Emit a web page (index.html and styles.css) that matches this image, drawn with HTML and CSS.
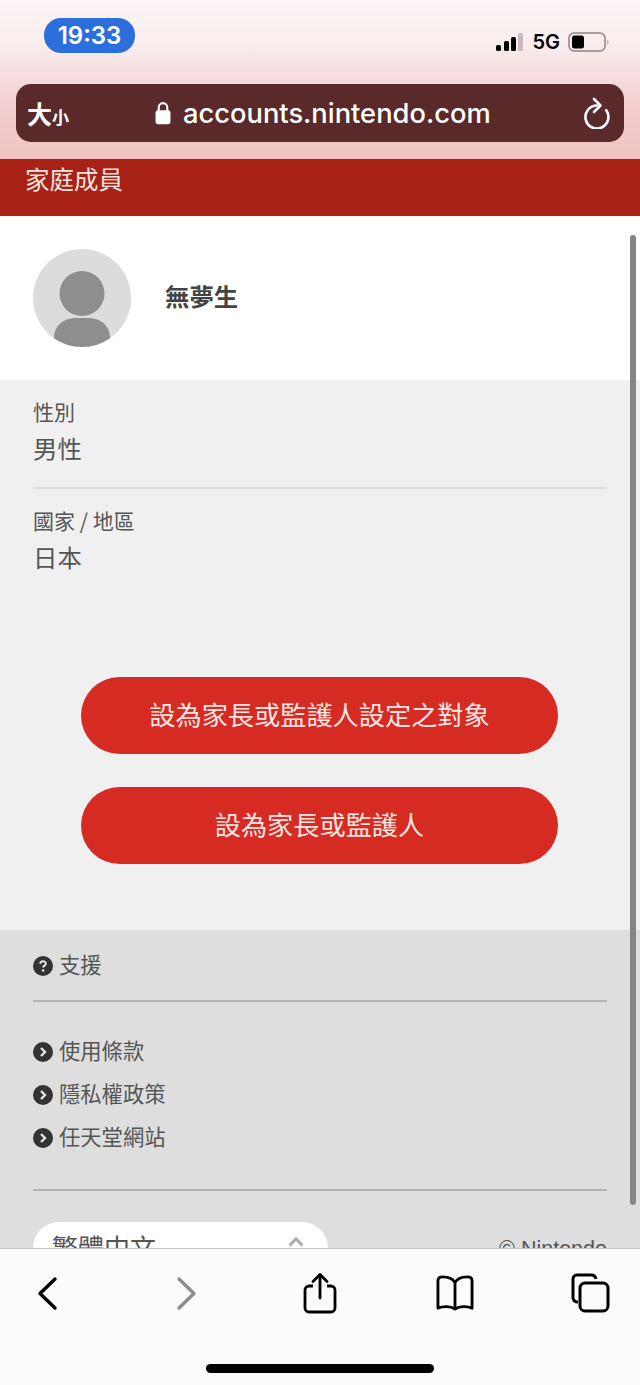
FILE: index.html
```html
<!DOCTYPE html>
<html lang="zh-Hant">
<head>
  <meta charset="UTF-8" />
  <meta name="viewport" content="width=device-width, initial-scale=1.0"/>
  <title>家庭成員</title>
  <link rel="stylesheet" href="styles.css">
</head>
<body>
  <div class="phone">
    <header class="chrome">
      <div class="status-row">
        <span class="clock">19:33</span>
        <div class="status-icons">
          <svg class="signal" width="29" height="20" viewBox="0 0 29 20">
            <rect x="1" y="13" width="5" height="6" rx="1.5" fill="#000"/>
            <rect x="9" y="9" width="5" height="10" rx="1.5" fill="#000"/>
            <rect x="16" y="5" width="5" height="14" rx="1.5" fill="#000"/>
            <rect x="23" y="1" width="5" height="18" rx="1.5" fill="#c9b9bc"/>
          </svg>
          <span class="network">5G</span>
          <svg class="battery" width="42" height="20" viewBox="0 0 42 20">
            <rect x="1" y="1" width="36" height="18" rx="5" fill="none" stroke="#8f8386" stroke-width="1.5"/>
            <rect x="4" y="3.5" width="12" height="13" rx="2.5" fill="#000"/>
            <path d="M39.5 7.5c1 .6 1.3 4.4 0 5z" fill="#8f8386"/>
          </svg>
        </div>
      </div>
      <div class="url-bar">
        <span class="text-size"><b>大</b><small>小</small></span>
        <div class="address">
          <svg width="16" height="24" viewBox="0 0 15 22">
            <path d="M3.5 9V5.8a4 4 0 0 1 8 0V9" fill="none" stroke="#fff" stroke-width="2"/>
            <rect x="0.5" y="8.5" width="14" height="13" rx="2" fill="#fff"/>
          </svg>
          <span>accounts.nintendo.com</span>
        </div>
        <svg class="reload" width="28" height="32" viewBox="0 0 28 32">
          <path d="M14 8.5A11.5 11.5 0 1 0 23.2 13.2" fill="none" stroke="#fff" stroke-width="2.6" stroke-linecap="round"/>
          <path d="M11 2l6.500 6.500L11 15" fill="none" stroke="#fff" stroke-width="2.6" stroke-linecap="round" stroke-linejoin="round"/>
        </svg>
      </div>
    </header>

    <main class="page">
      <div class="title-band">家庭成員</div>

      <section class="profile">
        <svg class="avatar" width="98" height="98" viewBox="0 0 98 98">
          <circle cx="49" cy="49" r="49" fill="#dcdcdc"/>
          <circle cx="49" cy="44.5" r="22.5" fill="#8e8e8e"/>
          <path d="M21 89.2C21 78 29 69 43 69h12c14 0 22 9 22 20.2A49 49 0 0 1 21 89.2z" fill="#8e8e8e"/>
        </svg>
        <span class="profile-name">無夢生</span>
      </section>

      <section class="details">
        <div class="field">
          <div class="field-label">性別</div>
          <div class="field-value">男性</div>
        </div>
        <div class="field field-last">
          <div class="field-label">國家 / 地區</div>
          <div class="field-value">日本</div>
        </div>
        <div class="buttons">
          <a href="#" class="red-btn">設為家長或監護人設定之對象</a>
          <a href="#" class="red-btn">設為家長或監護人</a>
        </div>
      </section>

      <footer class="site-footer">
        <div class="support">
          <a href="#" class="foot-link">
            <svg width="20" height="20" viewBox="0 0 20 20">
              <circle cx="10" cy="10" r="10" fill="#333"/>
              <path d="M7.3 7.8c0-3.4 5.5-3.4 5.5-.2 0 2-2.7 2-2.7 4" fill="none" stroke="#e6e6e6" stroke-width="2"/>
              <circle cx="10.1" cy="14.5" r="1.3" fill="#e6e6e6"/>
            </svg>
            <span>支援</span>
          </a>
        </div>
        <div class="foot-links">
          <a href="#" class="foot-link">
            <svg width="20" height="20" viewBox="0 0 20 20">
              <circle cx="10" cy="10" r="10" fill="#333"/>
              <path d="M8 6l4 4-4 4" fill="none" stroke="#e6e6e6" stroke-width="2.4"/>
            </svg>
            <span>使用條款</span>
          </a>
          <a href="#" class="foot-link">
            <svg width="20" height="20" viewBox="0 0 20 20">
              <circle cx="10" cy="10" r="10" fill="#333"/>
              <path d="M8 6l4 4-4 4" fill="none" stroke="#e6e6e6" stroke-width="2.4"/>
            </svg>
            <span>隱私權政策</span>
          </a>
          <a href="#" class="foot-link">
            <svg width="20" height="20" viewBox="0 0 20 20">
              <circle cx="10" cy="10" r="10" fill="#333"/>
              <path d="M8 6l4 4-4 4" fill="none" stroke="#e6e6e6" stroke-width="2.4"/>
            </svg>
            <span>任天堂網站</span>
          </a>
        </div>
        <div class="foot-bottom">
          <div class="lang-select">
            <span>繁體中文</span>
            <svg width="16" height="10" viewBox="0 0 16 10">
              <path d="M1.5 8.5L8 2l6.5 6.5" fill="none" stroke="#aaa" stroke-width="3"/>
            </svg>
          </div>
          <span class="copyright">© Nintendo</span>
        </div>
      </footer>

      <div class="scroll-thumb"></div>
    </main>

    <nav class="toolbar">
      <div class="tool-row">
        <svg width="24" height="36" viewBox="0 0 24 36">
          <path d="M20 4L5 18.5 20 33" fill="none" stroke="#000" stroke-width="3.4" stroke-linecap="round" stroke-linejoin="round"/>
        </svg>
        <svg class="forward" width="24" height="36" viewBox="0 0 24 36">
          <path d="M4 4l15 14.5L4 33" fill="none" stroke="#8c8c8c" stroke-width="3.4" stroke-linecap="round" stroke-linejoin="round"/>
        </svg>
        <svg class="share" width="34" height="42" viewBox="0 0 34 42">
          <path d="M10 14H6a4 4 0 0 0-4 4v18a4 4 0 0 0 4 4h22a4 4 0 0 0 4-4V18a4 4 0 0 0-4-4h-4" fill="none" stroke="#000" stroke-width="2.8"/>
          <path d="M17 26V3M10 9.5L17 2.5l7 7" fill="none" stroke="#000" stroke-width="2.8" stroke-linecap="round" stroke-linejoin="round"/>
        </svg>
        <svg width="40" height="36" viewBox="0 0 42 38">
          <path d="M21 8C18 3 13 2 8 2 5 2 3 3 3 6v29c5-2 13-2.5 18 1 5-3.5 13-3 18-1V6c0-3-2-4-5-4-5 0-10 1-13 6zM21 8v28" fill="none" stroke="#000" stroke-width="3" stroke-linejoin="round"/>
        </svg>
        <svg width="40" height="40" viewBox="0 0 40 40">
          <path d="M7 29a5 5 0 0 1-5-4V6a4 4 0 0 1 4-4h14a5 5 0 0 1 5 4" fill="none" stroke="#000" stroke-width="3"/>
          <rect x="9" y="10" width="28" height="28" rx="5" fill="none" stroke="#000" stroke-width="3"/>
        </svg>
      </div>
      <div class="home-bar"></div>
    </nav>
  </div>
</body>
</html>
```

FILE: styles.css
```css
* {
  box-sizing: border-box;
}

body {
  margin: 0;
  padding: 0;
  font-family: "Noto Sans CJK TC", "Noto Sans", sans-serif;
  color: #444;
}

a {
  color: inherit;
  text-decoration: none;
}

.phone {
  display: flex;
  flex-direction: column;
  width: 640px;
  height: 1385px;
  overflow: hidden;
}

/* browser top */
.chrome {
  flex: none;
  height: 159px;
  padding: 18px 16px 0;
  background: linear-gradient(#fbf5f5, #f9eced 28%, #f3cfd1 65%, #f0c2c2);
}

.status-row {
  display: flex;
  justify-content: space-between;
  align-items: flex-start;
  height: 66px;
  padding-left: 28px;
}

.clock {
  width: 91px;
  height: 35px;
  border-radius: 17px;
  background: #2c6fdc;
  color: #fff;
  font-family: Inter, sans-serif;
  font-size: 24px;
  font-weight: 600;
  line-height: 35px;
  text-align: center;
}

.status-icons {
  display: flex;
  align-items: center;
  gap: 8px;
  margin-top: 13px;
  margin-right: 14px;
  color: #000;
}

.network {
  font-family: Inter, sans-serif;
  font-size: 20px;
  font-weight: 600;
  line-height: 22px;
}

.url-bar {
  display: flex;
  align-items: center;
  height: 58px;
  padding: 0 13px 0 11px;
  border-radius: 15px;
  background: #5a2a2b;
  color: #fff;
}

.text-size {
  width: 128px;
  white-space: nowrap;
}

.text-size b {
  font-size: 25px;
}

.text-size small {
  font-size: 17px;
  font-weight: 700;
}

.address {
  display: flex;
  flex: 1;
  align-items: center;
  gap: 12px;
  font-family: Inter, sans-serif;
  font-size: 27.3px;
  font-weight: 500;
}

/* page */
.page {
  position: relative;
  flex: 1;
  min-height: 0;
  overflow: hidden;
  background: #dedede;
}

.title-band {
  height: 57px;
  padding: 1px 25px 0;
  background: #a72114;
  color: #f4e4e0;
  font-size: 24.5px;
  line-height: 38px;
}

.profile {
  display: flex;
  align-items: center;
  gap: 34px;
  height: 164px;
  padding-left: 33px;
  background: #fff;
}

.profile-name {
  margin-bottom: 4px;
  font-size: 24.4px;
  font-weight: 700;
  line-height: 30px;
}

.details {
  height: 550px;
  padding: 18px 33px 0;
  background: #f0f0f0;
}

.field {
  height: 91px;
  border-bottom: 2px solid #dcdcdc;
}

.field-last {
  height: 108px;
  margin-top: 18px;
  border-bottom: none;
}

.field-label {
  font-size: 21px;
  line-height: 26px;
  color: #555;
}

.field-value {
  margin-top: 6px;
  font-size: 24.4px;
  line-height: 36px;
  color: #555;
}

.buttons {
  display: flex;
  flex-direction: column;
  align-items: center;
  gap: 33px;
  margin-top: 62px;
  padding-right: 1px;
}

.red-btn {
  display: block;
  width: 477px;
  height: 77px;
  border-radius: 39px;
  background: #d52b23;
  color: #f8e6e3;
  font-size: 26.2px;
  line-height: 75px;
  text-align: center;
}

.site-footer {
  padding: 0 33px;
  background: #dedede;
}

.support {
  height: 72px;
  padding-top: 20px;
  border-bottom: 2px solid #b4b4b4;
}

.foot-links {
  display: flex;
  flex-direction: column;
  gap: 11px;
  height: 189px;
  padding-top: 34px;
  border-bottom: 2px solid #b4b4b4;
}

.foot-link {
  display: flex;
  align-items: center;
  gap: 6px;
  height: 32px;
  color: #555;
  font-size: 21.3px;
  line-height: 32px;
}

.foot-link svg {
  flex: none;
}

.foot-link span {
  margin-bottom: 5px;
}

.foot-bottom {
  display: flex;
  justify-content: space-between;
  margin-top: 31px;
}

.lang-select {
  display: flex;
  justify-content: space-between;
  width: 295px;
  height: 70px;
  padding: 7px 24px 0 19px;
  border-radius: 26px;
  background: #fff;
  color: #555;
  font-size: 26px;
  line-height: 36px;
}

.lang-select svg {
  margin-top: 8px;
}

.copyright {
  margin-top: 15px;
  color: #555;
  font-family: "Liberation Sans", sans-serif;
  font-size: 21.5px;
}

.scroll-thumb {
  position: absolute;
  top: 76px;
  right: 4px;
  width: 6px;
  height: 970px;
  border-radius: 3px;
  background: #858585;
}

/* browser bottom */
.toolbar {
  flex: none;
  height: 137px;
  border-top: 1px solid #c4c4c4;
  background: #fbfbfb;
}

.tool-row {
  display: grid;
  grid-template-columns: repeat(5, 136px);
  justify-items: center;
  align-items: center;
  width: 680px;
  height: 88px;
  margin-left: -21px;
}

.tool-row .forward {
  margin-left: 8px;
}

.tool-row .share {
  margin-left: 2px;
}

.home-bar {
  width: 228px;
  height: 9px;
  margin: 27px auto 0;
  border-radius: 5px;
  background: #000;
}
```
